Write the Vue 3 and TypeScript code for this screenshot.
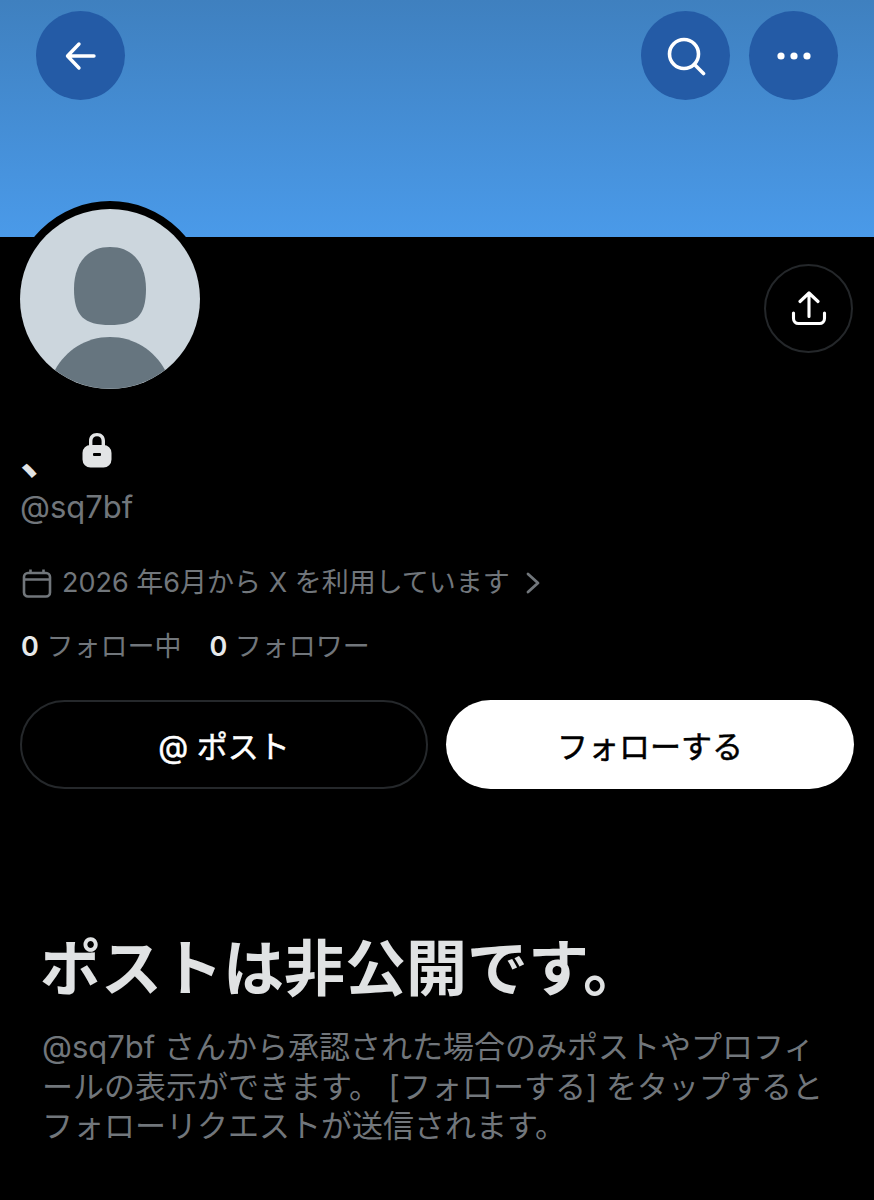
<template>
  <div class="page">
    <header class="banner">
      <button class="round" aria-label="back">
        <svg width="36" height="36" viewBox="0 0 36 36" fill="none" stroke="#fff" stroke-width="3.4" stroke-linecap="round" stroke-linejoin="round">
          <path d="M31 18H6M16 6 4.500 18 16 30" />
        </svg>
      </button>
      <div class="banner-right">
        <button class="round" aria-label="search">
          <svg width="40" height="40" viewBox="0 0 40 40" fill="none" stroke="#fff" stroke-width="3.6" stroke-linecap="round">
            <circle cx="18" cy="18" r="14.500" />
            <path d="m28.500 28.500 9 9" />
          </svg>
        </button>
        <button class="round" aria-label="more">
          <svg width="36" height="10" viewBox="0 0 36 10" fill="#fff">
            <circle cx="5" cy="5" r="3.600" />
            <circle cx="18" cy="5" r="3.600" />
            <circle cx="31" cy="5" r="3.600" />
          </svg>
        </button>
      </div>
    </header>

    <section class="profile">
      <div class="avatar-row">
        <div class="avatar">
          <svg width="180" height="180" viewBox="0 0 180 180">
            <circle cx="90" cy="90" r="90" fill="#ccd6dd" />
            <path d="M90 38c-24 0-36 18-36 42 0 27 10 36 36 36s36-9 36-36c0-24-12-42-36-42Z" fill="#66757f" />
            <path d="M35 161c11-20 31-33 55-33s44 13 55 33a90 90 0 0 1-110 0Z" fill="#66757f" />
          </svg>
        </div>
        <button class="share" aria-label="share">
          <svg width="36" height="36" viewBox="0 0 36 36" fill="none" stroke="#fff" stroke-width="3.100" stroke-linecap="round" stroke-linejoin="round">
            <path d="M18 25.500V2M9 10.500 18 2l9 8.500" />
            <path d="M2.500 22v5.500a5 5 0 0 0 5 5h21a5 5 0 0 0 5-5V22" />
          </svg>
        </button>
      </div>

      <div class="name-row">
        <span class="name">、</span>
        <svg class="lock" width="30" height="36" viewBox="0 0 30 36">
          <path d="M15 1c-5 0-8 3.200-8 8v6h3.400V9c0-3 1.800-4.800 4.600-4.800S19.600 6 19.600 9v6H23V9c0-4.800-3-8-8-8Z" fill="#e2e4e5" />
          <path d="M8.500 13h13a8 8 0 0 1 8 8v6.500a8 8 0 0 1-8 8h-13a8 8 0 0 1-8-8V21a8 8 0 0 1 8-8Z" fill="#e2e4e5" />
          <rect x="11" y="21" width="8" height="3" rx="1" fill="#000" />
        </svg>
      </div>
      <div class="handle">@sq7bf</div>

      <div class="joined">
        <svg width="30" height="30" viewBox="0 0 30 30" fill="none" stroke="#71767b" stroke-width="2.600" stroke-linejoin="round">
          <rect x="2" y="5" width="26" height="23.500" rx="4" />
          <path d="M2 11.500h26M8.500 1.500V5M21.500 1.500V5" />
        </svg>
        <span>2026 年6月から X を利用しています</span>
        <svg class="chev" width="14" height="22" viewBox="0 0 14 22" fill="none" stroke="#71767b" stroke-width="2.800" stroke-linecap="round" stroke-linejoin="round">
          <path d="m2 2 10 9-10 9" />
        </svg>
      </div>

      <div class="stats">
        <span><b>0</b> フォロー中</span>
        <span><b>0</b> フォロワー</span>
      </div>

      <div class="actions">
        <button class="btn outline">@ ポスト</button>
        <button class="btn solid">フォローする</button>
      </div>
    </section>

    <section class="private">
      <h1>ポストは非公開です。</h1>
      <p>@sq7bf さんから承認された場合のみポストやプロフィールの表示ができます。 [フォローする] をタップするとフォローリクエストが送信されます。</p>
    </section>
  </div>
</template>

<script setup lang="ts">
</script>

<style>
html, body {
  background: #000;
}
</style>

<style scoped>
.page {
  width: 874px;
  height: 1200px;
  overflow: hidden;
  background: #000;
  color: #71767b;
  font-family: Inter, "Noto Sans CJK JP", sans-serif;
}
.banner {
  height: 237px;
  box-sizing: border-box;
  padding: 11px 36px 0;
  display: flex;
  justify-content: space-between;
  align-items: flex-start;
  background: linear-gradient(180deg, #3f80bf 0%, #4a9ae9 100%);
}
.banner-right {
  display: flex;
  gap: 19px;
}
.round {
  width: 89px;
  height: 89px;
  padding: 0;
  border: none;
  border-radius: 50%;
  background: #245ba6;
  display: flex;
  align-items: center;
  justify-content: center;
}
.profile {
  padding: 0 20px;
}
.avatar-row {
  display: flex;
  justify-content: space-between;
  align-items: flex-start;
  height: 152px;
}
.avatar {
  width: 180px;
  height: 180px;
  margin: -36px 0 0 -8px;
  border: 8px solid #000;
  border-radius: 50%;
  background: #000;
  box-sizing: content-box;
}
.avatar svg {
  display: block;
}
.share {
  width: 89px;
  height: 89px;
  margin: 27px 1px 0 0;
  padding: 0;
  border: 2px solid #24272a;
  border-radius: 50%;
  background: #000;
  display: flex;
  align-items: center;
  justify-content: center;
}
.name-row {
  height: 90px;
  display: flex;
  align-items: flex-start;
  margin-top: 42px;
}
.name {
  font-size: 46px;
  font-weight: 700;
  color: #e2e4e5;
  line-height: 40px;
  width: 62px;
  margin-top: 6px;
}
.lock {
  margin-top: 1px;
}
.handle {
  font-size: 31px;
  line-height: 40px;
  margin-top: -34px;
}
.joined {
  display: flex;
  align-items: center;
  gap: 10px;
  margin-top: 36px;
  margin-left: 2px;
  font-size: 27px;
  line-height: 40px;
}
.chev {
  margin-left: 6px;
}
.stats {
  display: flex;
  gap: 28px;
  margin-top: 24px;
  margin-left: 1px;
  font-size: 27px;
  line-height: 40px;
}
.stats b {
  color: #e7e9ea;
  font-weight: 600;
}
.actions {
  display: grid;
  grid-template-columns: 1fr 1fr;
  gap: 18px;
  margin-top: 33px;
}
.btn {
  height: 89px;
  border-radius: 45px;
  font-family: inherit;
  font-size: 31px;
  font-weight: 400;
  -webkit-text-stroke: 0.5px currentColor;
}
.outline {
  background: #000;
  color: #fff;
  border: 2px solid #25282b;
}
.solid {
  background: #fff;
  color: #000;
  border: none;
}
.private {
  padding: 0 42px 0 40px;
  margin-top: 144px;
}
.private h1 {
  margin: 0;
  font-size: 61px;
  line-height: 72px;
  font-weight: 700;
  color: #e0e2e3;
}
.private p {
  margin: 22px 0 0 2px;
  font-size: 31px;
  line-height: 39.500px;
  line-break: loose;
}
</style>
